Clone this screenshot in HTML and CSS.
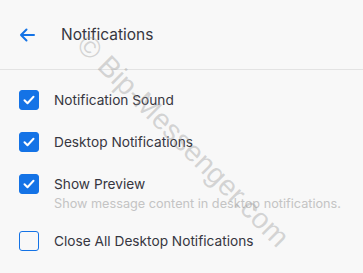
FILE: index.html
```html
<!DOCTYPE html>
<html>
<head>
<meta charset="utf-8">
<link rel="stylesheet" href="styles.css">
</head>
<body>
<div class="page">
  <header class="header">
    <svg class="back" width="16" height="14" viewBox="0 0 16 14" aria-hidden="true">
      <path d="M15 7H2M7.5 1.5L2 7l5.5 5.5" fill="none" stroke="#1473e6" stroke-width="2" stroke-linecap="round" stroke-linejoin="round"/>
    </svg>
    <h1 class="title">Notifications</h1>
  </header>
  <ul class="list">
    <li class="row">
      <span class="box checked"><svg width="12" height="10" viewBox="0 0 12 10"><path d="M1.5 5.2l3 3 6-6.4" fill="none" stroke="#fff" stroke-width="2" stroke-linecap="round" stroke-linejoin="round"/></svg></span>
      <div class="text"><div class="label">Notification Sound</div></div>
    </li>
    <li class="row">
      <span class="box checked"><svg width="12" height="10" viewBox="0 0 12 10"><path d="M1.5 5.2l3 3 6-6.4" fill="none" stroke="#fff" stroke-width="2" stroke-linecap="round" stroke-linejoin="round"/></svg></span>
      <div class="text"><div class="label">Desktop Notifications</div></div>
    </li>
    <li class="row">
      <span class="box checked"><svg width="12" height="10" viewBox="0 0 12 10"><path d="M1.5 5.2l3 3 6-6.4" fill="none" stroke="#fff" stroke-width="2" stroke-linecap="round" stroke-linejoin="round"/></svg></span>
      <div class="text"><div class="label">Show Preview</div><div class="desc">Show message content in desktop notifications.</div></div>
    </li>
    <li class="row">
      <span class="box"></span>
      <div class="text"><div class="label">Close All Desktop Notifications</div></div>
    </li>
  </ul>
  <div class="watermark">© Bip-Messenger.com</div>
</div>
</body>
</html>
```
FILE: styles.css
```css
* { box-sizing: border-box; }
html, body { margin: 0; padding: 0; }
body {
  background: #f8f8f8;
  font-family: Inter, "Noto Sans", sans-serif;
  color: #363640;
  width: 363px;
  height: 273px;
  overflow: hidden;
}
.page { position: relative; height: 273px; }
.header {
  height: 70px;
  display: flex;
  align-items: center;
  padding-left: 19px;
  border-bottom: 1px solid #e3e3e3;
}
.back { display: block; flex: none; }
.title {
  margin: 0 0 0 26px;
  font-size: 15.5px;
  font-weight: 400;
  color: #363640;
}
.list {
  list-style: none;
  margin: 0;
  padding: 20px 0 0 19px;
  display: flex;
  flex-direction: column;
  gap: 22px;
}
.row { display: flex; align-items: flex-start; gap: 15px; }
.box {
  flex: none;
  width: 20px;
  height: 20px;
  border-radius: 3px;
  border: 1.5px solid #1473e6;
  display: flex;
  align-items: center;
  justify-content: center;
}
.box.checked { background: #1473e6; }
.label { font-size: 13.7px; line-height: 20px; }
.desc { font-size: 12.7px; line-height: 16px; color: #c4c4c4; margin-top: 2px; margin-bottom: -3px; }
.watermark {
  position: absolute;
  left: 183px;
  top: 141px;
  transform: translate(-50%, -50%) rotate(45deg);
  font-family: "Liberation Sans", Arial, sans-serif;
  font-size: 29px;
  color: rgba(150,150,150,0.38);
  white-space: nowrap;
  pointer-events: none;
}
```
